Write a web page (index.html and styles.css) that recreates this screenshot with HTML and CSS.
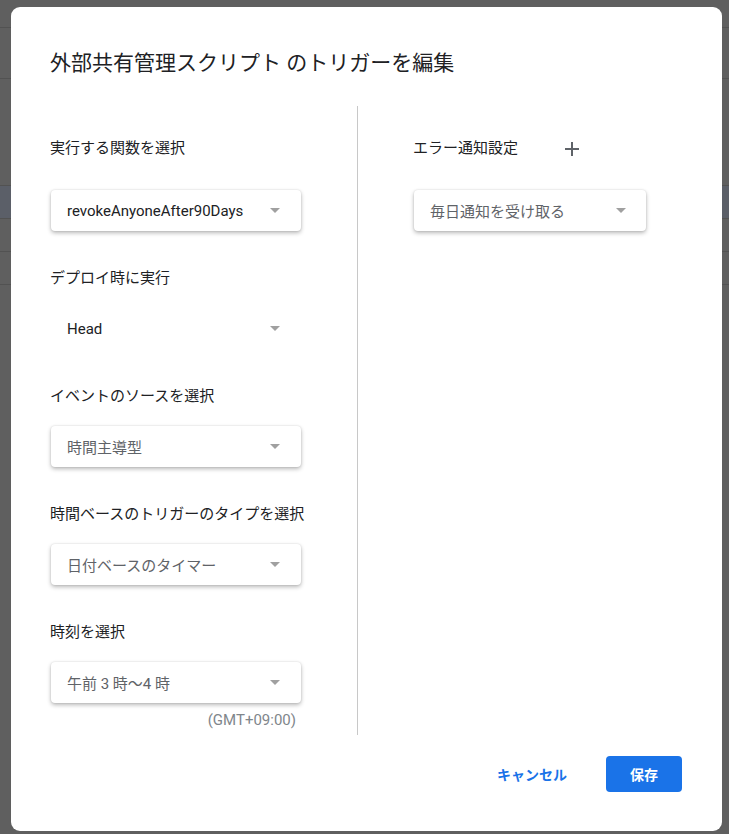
FILE: index.html
```html
<!DOCTYPE html>
<html lang="ja">
<head>
<meta charset="utf-8">
<link rel="stylesheet" href="styles.css">
</head>
<body>
<div class="backdrop">
  <div class="bg-row r1"></div>
  <div class="bg-row r2"></div>
  <div class="bg-row r3"></div>
  <div class="bg-row r4 hl"></div>
  <div class="bg-row r5"></div>
  <div class="bg-row r6"></div>
</div>
<div class="dialog">
  <h1 class="title">外部共有管理スクリプト のトリガーを編集</h1>
  <div class="body">
    <div class="col left">
      <div class="group first">
        <div class="label">実行する関数を選択</div>
        <div class="select raised dark"><span class="val">revokeAnyoneAfter90Days</span><span class="arrow"></span></div>
      </div>
      <div class="group">
        <div class="label">デプロイ時に実行</div>
        <div class="select dark"><span class="val">Head</span><span class="arrow"></span></div>
      </div>
      <div class="group">
        <div class="label">イベントのソースを選択</div>
        <div class="select raised"><span class="val">時間主導型</span><span class="arrow"></span></div>
      </div>
      <div class="group">
        <div class="label">時間ベースのトリガーのタイプを選択</div>
        <div class="select raised"><span class="val">日付ベースのタイマー</span><span class="arrow"></span></div>
      </div>
      <div class="group">
        <div class="label">時刻を選択</div>
        <div class="select raised"><span class="val">午前 3 時〜4 時</span><span class="arrow"></span></div>
        <div class="tz">(GMT+09:00)</div>
      </div>
    </div>
    <div class="divider"></div>
    <div class="col right">
      <div class="group first">
        <div class="label-row">
          <div class="label">エラー通知設定</div>
          <svg class="plus" width="14" height="14" viewBox="0 0 14 14"><path d="M7 0v14M0 7h14" stroke="#5f6368" stroke-width="2" fill="none"/></svg>
        </div>
        <div class="select raised wide"><span class="val">毎日通知を受け取る</span><span class="arrow"></span></div>
      </div>
    </div>
  </div>
  <div class="footer">
    <button class="btn cancel">キャンセル</button>
    <button class="btn save">保存</button>
  </div>
</div>
</body>
</html>
```
FILE: styles.css
```css
* { box-sizing: border-box; }
html, body { margin: 0; padding: 0; }
body {
  width: 729px;
  height: 834px;
  background: #5f5f5f;
  font-family: Roboto, "Noto Sans CJK JP", sans-serif;
  overflow: hidden;
  position: relative;
}
.backdrop { display: flex; flex-direction: column; }
.bg-row { border-bottom: 1px solid #525252; }
.r1 { height: 28px; }
.r2 { height: 51px; }
.r3 { height: 107px; }
.r4 { height: 33px; }
.hl { background: #5b5f68; }
.r5 { height: 33px; }
.r6 { height: 33px; }

.dialog {
  position: absolute;
  left: 11px;
  top: 7px;
  width: 711px;
  height: 824px;
  background: #fff;
  border-radius: 9px;
  padding: 42px 40px 39px 39px;
  display: flex;
  flex-direction: column;
}
.title {
  margin: 0;
  font-size: 21px;
  line-height: 28px;
  font-weight: 400;
  color: #202124;
}
.body {
  display: flex;
  margin-top: 29px;
  height: 629px;
}
.col { display: flex; flex-direction: column; padding-top: 32px; }
.left { width: 307px; }
.right { padding-left: 55px; }
.divider { width: 1px; background: #c8c8c8; }
.group { display: flex; flex-direction: column; margin-top: 37px; }
.group.first { margin-top: 0; }
.label {
  font-size: 15px;
  line-height: 20px;
  color: #202124;
}
.label-row { display: flex; align-items: center; gap: 47px; }
.plus { margin-top: 1px; }
.group .label { margin-bottom: 20px; }
.group.first .label { margin-bottom: 32px; }
.group.first .label-row { margin-bottom: 32px; }
.label-row .label { margin-bottom: 0 !important; }
.select {
  width: 250px;
  height: 41px;
  margin-left: 1px;
  border-radius: 4px;
  display: flex;
  align-items: center;
  justify-content: space-between;
  padding: 0 21px 0 16px;
  font-size: 15px;
  color: #5f6368;
}
.select.wide { width: 232px; padding-right: 20px; }
.select.dark { color: #202124; }
.select.raised {
  box-shadow: 0 2px 4px rgba(0,0,0,0.28), 0 0 2px rgba(0,0,0,0.12);
}
.arrow {
  width: 0; height: 0;
  border-left: 5px solid transparent;
  border-right: 5px solid transparent;
  border-top: 5px solid #a0a0a0;
}
.tz {
  margin-top: 7px;
  width: 246px;
  text-align: right;
  font-size: 15px;
  line-height: 20px;
  color: #80868b;
}
.footer {
  margin-top: auto;
  display: flex;
  justify-content: flex-end;
  align-items: center;
  gap: 23px;
}
.btn {
  font-family: Roboto, "Noto Sans CJK JP", sans-serif;
  font-size: 14px;
  font-weight: 700;
  border: none;
  border-radius: 4px;
  height: 36px;
  cursor: pointer;
}
.cancel { background: transparent; color: #1a73e8; padding: 0 16px; }
.save { background: #1a73e8; color: #fff; width: 76px; }
```
